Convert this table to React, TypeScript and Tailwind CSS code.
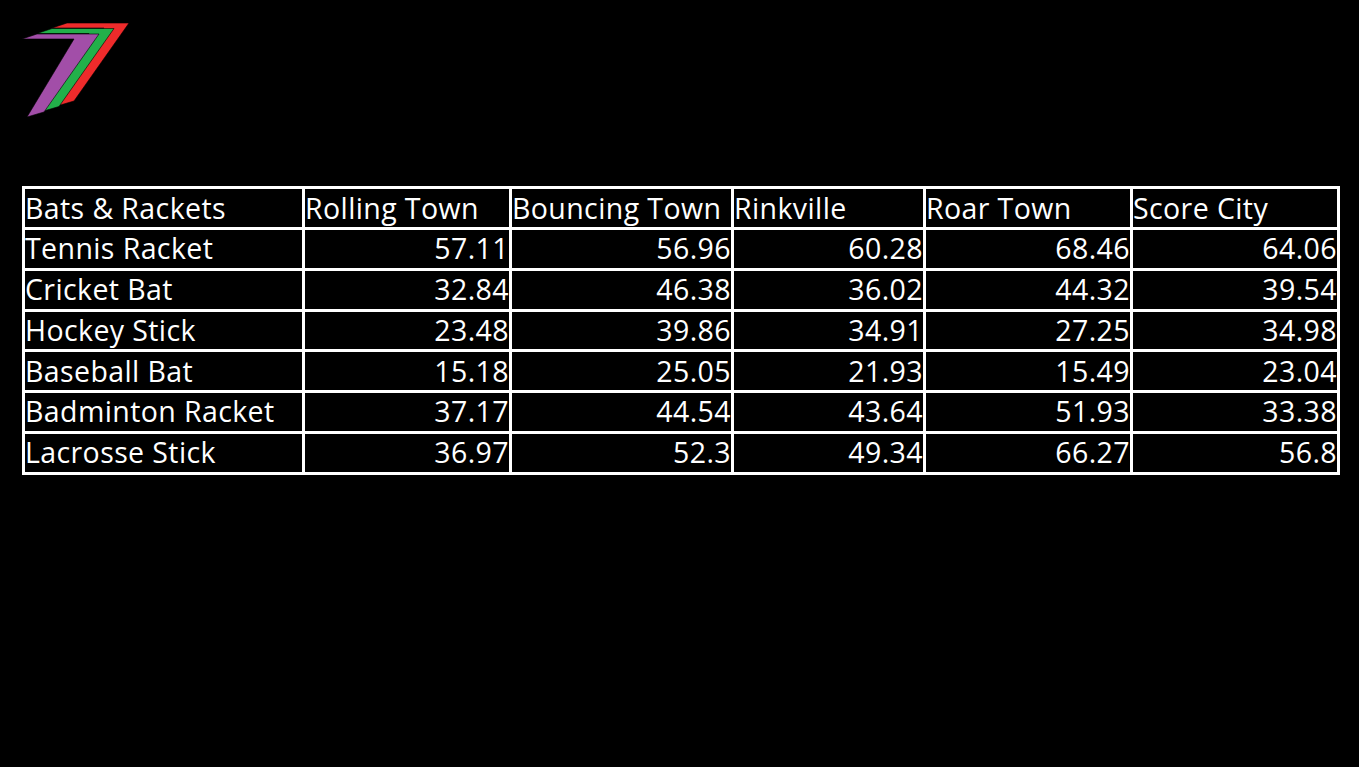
import React from "react";

const headers = ["Bats & Rackets", "Rolling Town", "Bouncing Town", "Rinkville", "Roar Town", "Score City"];
const rows: [string, string[]][] = [
  ["Tennis Racket", ["57.11", "56.96", "60.28", "68.46", "64.06"]],
  ["Cricket Bat", ["32.84", "46.38", "36.02", "44.32", "39.54"]],
  ["Hockey Stick", ["23.48", "39.86", "34.91", "27.25", "34.98"]],
  ["Baseball Bat", ["15.18", "25.05", "21.93", "15.49", "23.04"]],
  ["Badminton Racket", ["37.17", "44.54", "43.64", "51.93", "33.38"]],
  ["Lacrosse Stick", ["36.97", "52.3", "49.34", "66.27", "56.8"]],
];
const widths = ["w-[280px]", "w-[207px]", "w-[222px]", "w-[192px]", "w-[207px]", "w-[207px]"];

function Logo() {
  const shape = "22,39 37,34 99,34 44,112 27,117 74,39";
  return (
    <svg width="120" height="110" viewBox="15 15 120 110" className="block">
      <polygon points={shape} transform="translate(30,-11)" fill="#ee2b2b" stroke="#000" strokeWidth="0.6" />
      <polygon points={shape} transform="translate(15,-5.5)" fill="#22b04a" stroke="#000" strokeWidth="0.6" />
      <polygon points={shape} fill="#a24ea8" stroke="#000" strokeWidth="0.6" />
    </svg>
  );
}

export default function App() {
  return (
    <div className="w-[1359px] h-[767px] bg-black text-white overflow-hidden" style={{ fontFamily: "'Open Sans', sans-serif" }}>
      <div className="pt-[15px] pl-[15px]">
        <Logo />
      </div>
      <div className="pl-[22px] pt-[61px]">
        <table className="border-collapse border-[3px] border-white text-[28.5px] leading-none tracking-[0.4px]">
          <thead>
            <tr className="h-[41px]">
              {headers.map((h, i) => (
                <th key={h} className={`${widths[i]} border-[3px] border-white font-normal text-left align-bottom px-0 pb-[5px] whitespace-nowrap`}>
                  {h}
                </th>
              ))}
            </tr>
          </thead>
          <tbody>
            {rows.map(([name, vals]) => (
              <tr key={name} className="h-[40.8px]">
                <td className="border-[3px] border-white text-left align-bottom px-0 pb-[5px] whitespace-nowrap">{name}</td>
                {vals.map((v, i) => (
                  <td key={i} className="border-[3px] border-white text-right align-bottom px-0 pb-[5px] whitespace-nowrap">{v}</td>
                ))}
              </tr>
            ))}
          </tbody>
        </table>
      </div>
    </div>
  );
}
